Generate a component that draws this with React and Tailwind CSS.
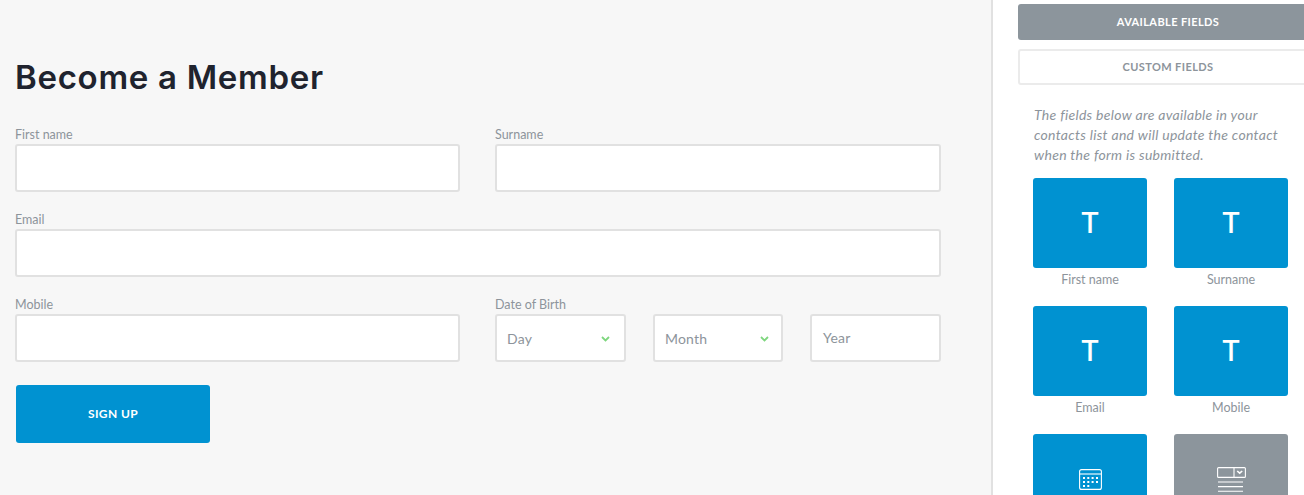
const labelClass = "mb-[2px] block text-[12.5px] leading-[15px] text-[#8d949b]";
const boxClass = "h-12 w-full rounded-[3px] border-2 border-[#e1e1e1] bg-white";

const Field = ({ label, className }) => (
  <div className={className}>
    <label className={labelClass}>{label}</label>
    <div className={boxClass}></div>
  </div>
);

const Dropdown = ({ text, className }) => (
  <div
    className={`flex h-12 items-center justify-between rounded-[3px] border-2 border-[#e1e1e1] bg-white pl-[10px] ${className}`}
  >
    <span className="text-[14px] tracking-[0.2px] text-[#8d949b]">{text}</span>
    <svg className="mt-[2px]" width="9" height="6" viewBox="0 0 9 6" fill="none" stroke="#7ed67e" strokeWidth="1.8">
      <path d="M1 1l3.500 3.400L8 1" />
    </svg>
  </div>
);

const CalendarIcon = () => (
  <svg width="23" height="21" viewBox="0 0 23 21" fill="none" stroke="white" strokeWidth="1.1">
    <rect x="0.6" y="0.6" width="21.800" height="19.800" rx="2" />
    <path d="M0.6 5h21.800" />
    <g fill="white" stroke="none">
      <rect x="4" y="8" width="2" height="2" />
      <rect x="8.300" y="8" width="2" height="2" />
      <rect x="12.600" y="8" width="2" height="2" />
      <rect x="17" y="8" width="2" height="2" />
      <rect x="4" y="12" width="2" height="2" />
      <rect x="8.300" y="12" width="2" height="2" />
      <rect x="12.600" y="12" width="2" height="2" />
      <rect x="17" y="12" width="2" height="2" />
      <rect x="4" y="16" width="2" height="2" />
      <rect x="8.300" y="16" width="2" height="2" />
    </g>
  </svg>
);

const SelectIcon = () => (
  <svg width="29" height="25" viewBox="0 0 29 25" fill="none" stroke="white" strokeWidth="1.1">
    <rect x="0.6" y="0.6" width="27.800" height="9.800" rx="1" />
    <path d="M17 0.6v9.800" />
    <path d="M20.200 4l2.500 2.200L25.200 4" strokeWidth="1.6" />
    <path d="M1 15h25M1 19.600h25M1 24.300h25" />
  </svg>
);

const Tile = ({ label, grey, children }) => (
  <div className="w-[114px] shrink-0">
    <div
      className={`flex h-[90px] items-center justify-center rounded-[3px] ${grey ? "bg-[#8c959c]" : "bg-[#0092d1]"}`}
    >
      {children}
    </div>
    {label && (
      <p className="mt-[4px] h-[34px] text-center text-[12.5px] leading-[15px] text-[#8d949b]">
        {label}
      </p>
    )}
  </div>
);

const Letter = () => (
  <span className="font-['Inter',sans-serif] text-[29px] font-medium text-white">T</span>
);

export default function App() {
  return (
    <div className="flex h-[495px] w-[1304px] overflow-hidden bg-white font-['Lato',sans-serif]">
      <main className="w-[991px] shrink-0 bg-[#f7f7f7] pt-[56px] pl-[15px]">
        <h1 className="font-['Inter',sans-serif] text-[33px] leading-[42px] font-semibold tracking-[0.7px] text-[#20232e]">
          Become a Member
        </h1>
        <div className="mt-[29px] flex w-[926px] flex-col gap-[20px]">
          <div className="flex gap-[35px]">
            <Field label="First name" className="w-[445px]" />
            <Field label="Surname" className="w-[446px]" />
          </div>
          <Field label="Email" />
          <div className="flex gap-[35px]">
            <Field label="Mobile" className="w-[445px]" />
            <div className="w-[446px]">
              <label className={labelClass}>Date of Birth</label>
              <div className="flex justify-between">
                <Dropdown text="Day" className="w-[131px] pr-[14px]" />
                <Dropdown text="Month" className="w-[130px] pr-[12px]" />
                <div className="flex h-12 w-[131px] items-center rounded-[3px] border-2 border-[#e1e1e1] bg-white pb-[2px] pl-[11px]">
                  <span className="text-[14px] tracking-[0.2px] text-[#8d949b]">Year</span>
                </div>
              </div>
            </div>
          </div>
        </div>
        <button className="mt-[23px] ml-px h-[58px] w-[194px] rounded-[3px] bg-[#0092d1] text-[12px] font-bold tracking-[0.4px] text-white">
          SIGN UP
        </button>
      </main>

      <aside className="w-[313px] shrink-0 border-l-2 border-[#e1e1e1] pt-1 pl-[25px]">
        <div className="flex h-9 w-[300px] items-center justify-center rounded-[3px] bg-[#8c959c] text-[11px] font-bold tracking-[0.4px] text-white">
          AVAILABLE FIELDS
        </div>
        <div className="mt-[9px] flex h-9 w-[300px] items-center justify-center rounded-[3px] border-2 border-[#ebebeb] bg-white text-[11px] font-bold tracking-[0.4px] text-[#8d949b]">
          CUSTOM FIELDS
        </div>
        <p className="mt-[20px] ml-4 w-[256px] text-[14px] leading-5 tracking-[0.3px] text-[#8d949b] italic">
          The fields below are available in your contacts list and will update the contact when
          the form is submitted.
        </p>
        <div className="mt-[13px] ml-[15px] grid w-[255px] grid-cols-[114px_114px] justify-between">
          <Tile label="First name"><Letter /></Tile>
          <Tile label="Surname"><Letter /></Tile>
          <Tile label="Email"><Letter /></Tile>
          <Tile label="Mobile"><Letter /></Tile>
          <Tile><CalendarIcon /></Tile>
          <Tile grey><SelectIcon /></Tile>
        </div>
      </aside>
    </div>
  );
}
